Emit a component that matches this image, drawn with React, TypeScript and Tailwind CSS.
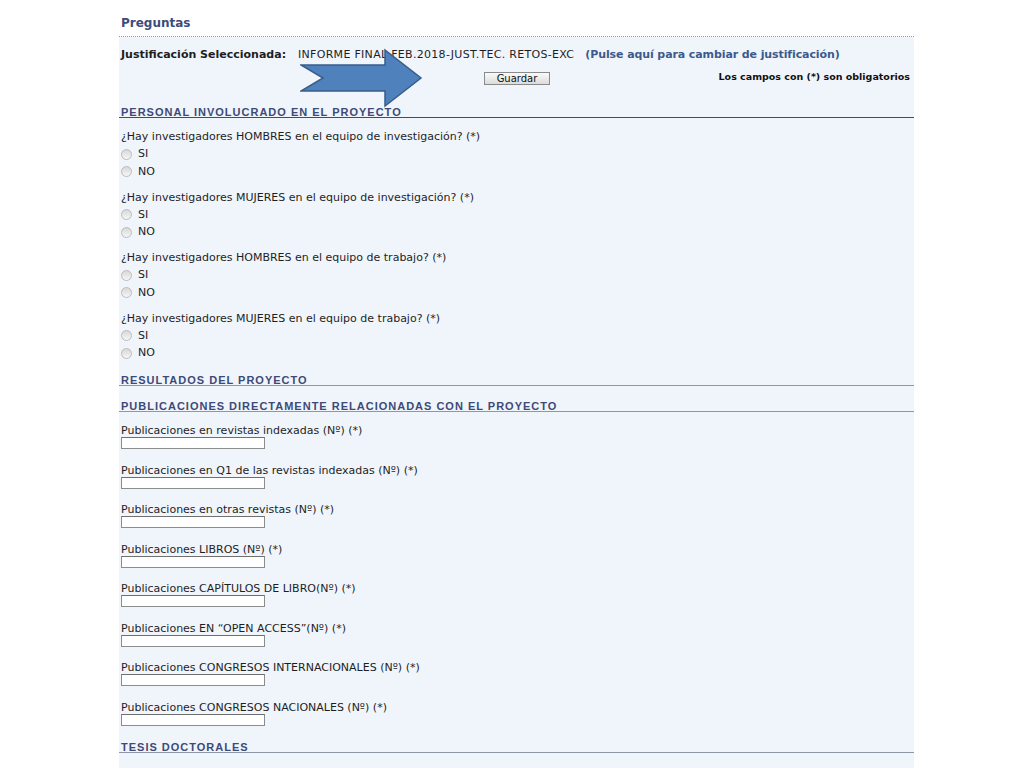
import React from 'react';

const QUESTIONS = [
  '¿Hay investigadores HOMBRES en el equipo de investigación? (*)',
  '¿Hay investigadores MUJERES en el equipo de investigación? (*)',
  '¿Hay investigadores HOMBRES en el equipo de trabajo? (*)',
  '¿Hay investigadores MUJERES en el equipo de trabajo? (*)',
];

const PUBLICACIONES = [
  'Publicaciones en revistas indexadas (Nº) (*)',
  'Publicaciones en Q1 de las revistas indexadas (Nº) (*)',
  'Publicaciones en otras revistas (Nº) (*)',
  'Publicaciones LIBROS (Nº) (*)',
  'Publicaciones CAPÍTULOS DE LIBRO(Nº) (*)',
  'Publicaciones EN “OPEN ACCESS”(Nº) (*)',
  'Publicaciones CONGRESOS INTERNACIONALES (Nº) (*)',
  'Publicaciones CONGRESOS NACIONALES (Nº) (*)',
];

function SectionHeader({ title, dark, className }: { title: string; dark?: boolean; className?: string }) {
  return (
    <div
      className={`h-[11px] leading-[10px] border-b text-[11px] font-bold tracking-[1px] text-[#3d4a78] font-['Liberation_Sans',Arial,sans-serif] ${
        dark ? 'border-[#4a4a55]' : 'border-[#8e97a8]'
      } ${className ?? ''}`}
    >
      <span className="pl-[2px]">{title}</span>
    </div>
  );
}

function Radio({ label }: { label: string }) {
  return (
    <div className="h-[17.5px] flex items-center gap-[6px]">
      <span className="w-[11px] h-[11px] rounded-full border border-[#bcbcbc] bg-gradient-to-b from-[#d8d8d8] to-[#f6f6f6]" />
      <span>{label}</span>
    </div>
  );
}

function Question({ text }: { text: string }) {
  return (
    <div className="pl-[2px]">
      <div className="h-[17.5px] leading-[17.5px] whitespace-nowrap">{text}</div>
      <Radio label="SI" />
      <Radio label="NO" />
    </div>
  );
}

function Arrow() {
  return (
    <svg className="absolute left-[300px] top-[48px]" width="124" height="62" viewBox="0 0 124 62">
      <path
        d="M1 17 L85 17 L85 2 L121 30 L85 58 L85 43 L1 43 L23 30 Z"
        fill="#4f81bd"
        stroke="#385d8a"
        strokeWidth="1.5"
        strokeLinejoin="miter"
      />
    </svg>
  );
}

export default function App() {
  return (
    <div className="relative w-full min-h-[768px] bg-white text-[11px] text-[#1e1e1e] font-['DejaVu_Sans',Verdana,sans-serif]">
      <div className="ml-[119px] w-[795px]">
        <div className="h-[37px] border-b border-dotted border-[#9a9a9a] bg-white pt-[16px] pl-[2px]">
          <span className="text-[12px] leading-[15px] font-bold text-[#3c4c7c]">Preguntas</span>
        </div>

        <div className="bg-[#f0f5fc] min-h-[731px] pb-[20px]">
          <div className="pt-[11px] pl-[2px] h-[25px] leading-[14px] flex whitespace-nowrap">
            <span className="font-bold w-[177px]">Justificación Seleccionada:</span>
            <span className="tracking-[0.3px]">INFORME FINAL FEB.2018-JUST.TEC. RETOS-EXC</span>
            <span className="ml-[11px] font-bold tracking-[-0.1px] text-[#3b5b8c]">(Pulse aquí para cambiar de justificación)</span>
          </div>

          <div className="mt-[10px] h-[13px] flex items-center pr-[4px]">
            <button className="ml-[365px] w-[66px] h-[13px] leading-[11px] text-[10px] border border-[#8a8a8a] bg-gradient-to-b from-[#fafafa] to-[#dcdcdc] text-[#111]">
              Guardar
            </button>
            <span className="ml-auto -mt-[2px] font-bold text-[9.5px] text-[#111]">Los campos con (*) son obligatorios</span>
          </div>

          <SectionHeader title="PERSONAL INVOLUCRADO EN EL PROYECTO" dark className="mt-[22px]" />

          <div className="mt-[10px] flex flex-col gap-[8px]">
            {QUESTIONS.map((q) => (
              <Question key={q} text={q} />
            ))}
          </div>

          <SectionHeader title="RESULTADOS DEL PROYECTO" className="mt-[13px]" />
          <SectionHeader title="PUBLICACIONES DIRECTAMENTE RELACIONADAS CON EL PROYECTO" className="mt-[15px]" />

          <div className="mt-[13px] flex flex-col gap-[15.5px] pl-[2px]">
            {PUBLICACIONES.map((p) => (
              <div key={p}>
                <div className="h-[12px] leading-[12px] whitespace-nowrap">{p}</div>
                <input
                  type="text"
                  className="block w-[144px] h-[12px] bg-white border border-[#8c8c8c] border-t-[#6f6f6f] outline-none"
                />
              </div>
            ))}
          </div>

          <SectionHeader title="TESIS DOCTORALES" className="mt-[16.5px]" />
        </div>
      </div>
      <Arrow />
    </div>
  );
}
